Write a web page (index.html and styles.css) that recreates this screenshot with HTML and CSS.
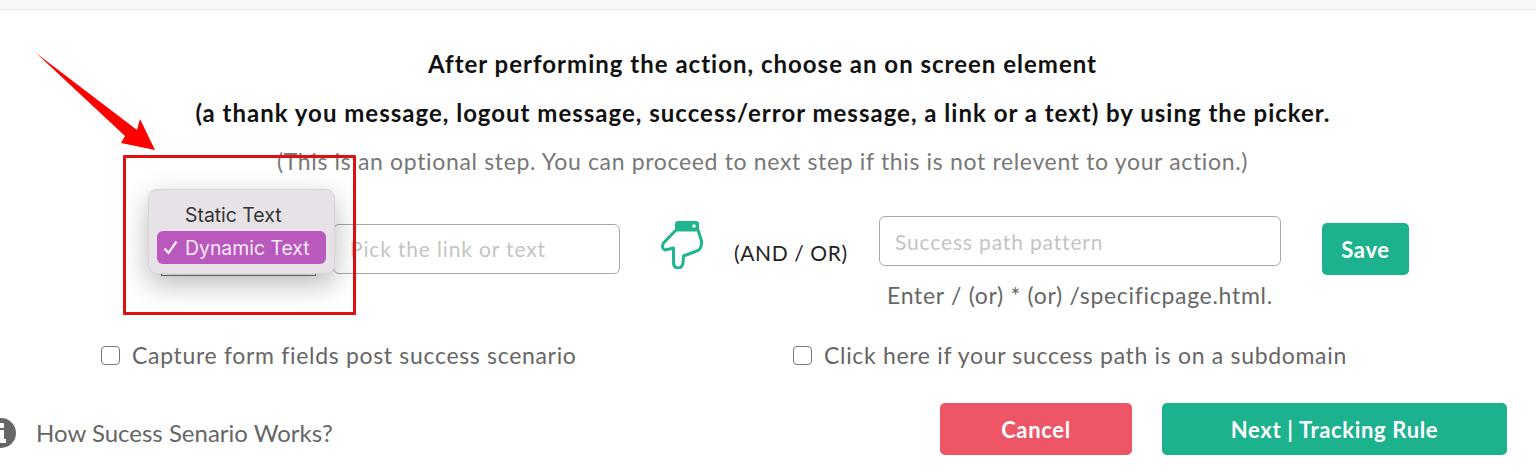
FILE: index.html
```html
<!DOCTYPE html>
<html lang="en">
<head>
<meta charset="utf-8">
<title>Success scenario</title>
<link rel="stylesheet" href="styles.css">
</head>
<body>
<div class="topbar"></div>
<main class="panel">
  <h2 class="title">After performing the action, choose an on screen element</h2>
  <h2 class="title second">(a thank you message, logout message, success/error message, a link or a text) by using the picker.</h2>
  <p class="note">(This is an optional step. You can proceed to next step if this is not relevent to your action.)</p>

  <div class="picker-row">
    <div class="select-stub"></div>
    <div class="input pick"><span>Pick the link or text</span></div>
    <svg class="hand" viewBox="0 0 44 50" aria-hidden="true">
      <path d="M16 11 L3.500 24 Q1 29 5 31 L13.500 29 V44 Q14 49 18 49 Q22 49 23 44 L23.500 37 L38 31.500 Q42 29 41.500 22 L38 11 Z" fill="#fff" stroke="#1fb590" stroke-width="3" stroke-linejoin="round"/>
      <path d="M15 5 Q15 2 18 2 H36 Q39 2 39 5 V12 H15 Z" fill="#1fb590"/>
      <circle cx="34" cy="7" r="1.800" fill="#fff"/>
    </svg>
    <div class="and-or">(AND / OR)</div>
    <div class="path-col">
      <div class="input path"><span>Success path pattern</span></div>
      <div class="hint">Enter / (or) * (or) /specificpage.html.</div>
    </div>
    <button class="btn save">Save</button>
  </div>

  <div class="check-row">
    <label class="check first"><span class="box"></span>Capture form fields post success scenario</label>
    <label class="check"><span class="box"></span>Click here if your success path is on a subdomain</label>
  </div>

  <div class="footer">
    <svg class="info" viewBox="0 0 30 30" aria-hidden="true">
      <circle cx="15" cy="15" r="15" fill="#666"/>
      <rect x="11" y="5" width="7" height="5" rx="1" fill="#fff"/>
      <path d="M9 12 H18 V21 H20 V25 H9 V21 H11 V16 H9 Z" fill="#fff"/>
    </svg>
    <span class="how">How Sucess Senario Works?</span>
    <button class="btn cancel">Cancel</button>
    <button class="btn next">Next | Tracking Rule</button>
  </div>
</main>

<svg class="arrow" viewBox="0 0 130 120" aria-hidden="true">
  <path d="M0 0 L101 77 L104 66 L119 97 L85 90 L89 83 Z" fill="#fb0100"/>
</svg>
<div class="red-box"></div>
<div class="menu">
  <div class="menu-item">Static Text</div>
  <div class="menu-item active">
    <svg class="tick" viewBox="0 0 15 15" aria-hidden="true"><path d="M1.500 8.500 L5.500 13 L13.500 1.500" fill="none" stroke="#f8eff9" stroke-width="2.200"/></svg>
    Dynamic Text
  </div>
</div>
</body>
</html>
```
FILE: styles.css
```css
* { box-sizing: border-box; }
html, body { margin: 0; height: 474px; overflow: hidden; background: #fff; }
body { font-family: Lato, "Liberation Sans", sans-serif; position: relative; color: #666; }
.topbar { height: 10px; background: #f7f7f7; border-bottom: 1px solid #e9e9e9; }
.panel { padding-top: 37px; }
.title { margin: 0; text-align: center; font-size: 24px; line-height: 34px; font-weight: 700; color: #111; letter-spacing: 1px; padding-right: 11px; }
.second { margin-top: 15px; padding-right: 10px; }
.note { margin: 14px 0 0; text-align: center; font-size: 23px; line-height: 34px; color: #777; letter-spacing: 0.66px; padding-right: 11px; }

.picker-row { display: flex; align-items: flex-start; margin-top: 38px; padding-left: 161px; height: 122px; }
.select-stub { width: 155px; height: 60px; border: 1px solid #777; background: #fff; margin-right: 17px; }
.input { border: 1.500px solid #a8a8a8; border-radius: 6px; background: #fff; display: flex; align-items: center; color: #c4c4c4; font-size: 21px; letter-spacing: 0.85px; }
.pick { width: 287px; height: 50px; margin-top: 8px; padding: 0 0 2px 16px; }
.hand { width: 44px; height: 50px; margin: 3px 30px 0 40px; }
.and-or { width: 114px; margin-top: 20px; font-size: 21px; line-height: 34px; color: #222; letter-spacing: 0.6px; white-space: nowrap; }
.path-col { width: 402px; margin-left: 31px; }
.path { height: 50px; padding-left: 15px; }
.hint { margin-top: 12px; padding-left: 8px; font-size: 23px; line-height: 34px; color: #666; letter-spacing: 0.7px; white-space: nowrap; }
.btn { border: 0; border-radius: 5px; color: #fff; font-family: inherit; font-weight: 700; font-size: 22px; letter-spacing: 0.65px; padding: 0; }
.save { width: 87px; height: 52px; margin: 7px 0 0 41px; background: #1bb28d; }

.check-row { display: flex; padding-left: 101px; }
.check { display: flex; align-items: center; font-size: 23px; line-height: 34px; color: #666; letter-spacing: 0.68px; white-space: nowrap; }
.first { width: 692px; }
.box { width: 19px; height: 19px; border: 1.500px solid #777; border-radius: 4px; margin-right: 12px; background: #fff; }

.footer { display: flex; align-items: flex-start; margin-top: 31px; }
.info { width: 30px; height: 30px; margin: 15px 0 0 -14px; }
.how { width: 904px; margin: 13px 0 0 20px; font-size: 24px; line-height: 34px; color: #666; }
.cancel { width: 192px; height: 52px; background: #ee5566; }
.next { width: 345px; height: 52px; margin-left: 30px; background: #1bb28d; }

.arrow { position: absolute; left: 36px; top: 53px; width: 130px; height: 120px; overflow: visible; }
.red-box { position: absolute; left: 123px; top: 155px; width: 233px; height: 160px; border: 3px solid #e01010; border-radius: 1px; }
.menu { position: absolute; left: 148px; top: 189px; width: 187px; height: 85px; padding: 8px; background: #e7e2e7; border: 1px solid #d8d4d8; border-radius: 9px; box-shadow: 0 10px 28px rgba(0, 0, 0, 0.28); font-family: Inter, "Liberation Sans", sans-serif; font-size: 19.400px; }
.menu-item { height: 33px; line-height: 35px; padding-left: 28px; color: #333; position: relative; }
.active { background: #b958bd; color: #f5eaf6; border-radius: 6px; }
.tick { position: absolute; left: 6px; top: 9px; width: 15px; height: 15px; }
```
